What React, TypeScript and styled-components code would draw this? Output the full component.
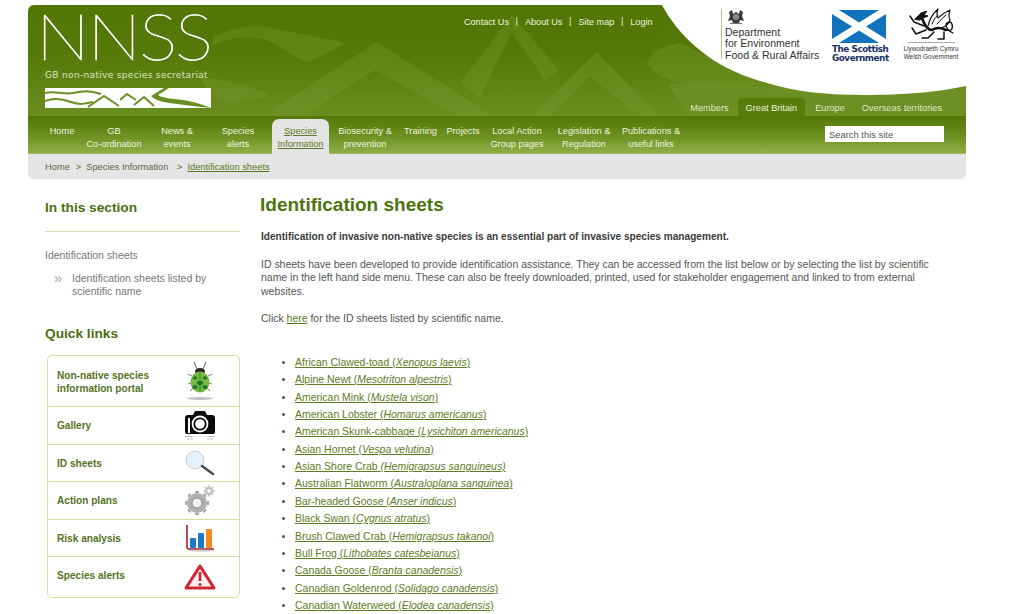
import styled, { createGlobalStyle } from "styled-components";

const GlobalStyle = createGlobalStyle`
    html, body {
        margin: 0;
        padding: 0;
        background: #fff;
        height: 614px;
        overflow: hidden;
    }
    body {
        font-family: "Liberation Sans", Arial, sans-serif;
    }
`;

const Page = styled.div`
    width: 938px;
    padding: 5px 0 0 28px;
`;

const Banner = styled.header`
    position: relative;
    display: flex;
    height: 111px;
    padding-left: 17px;
    box-sizing: border-box;
    border-radius: 6px 0 0 0;
    overflow: hidden;
    background: linear-gradient(180deg, #537706 0%, #567a0a 45%, #6a8e20 100%);
`;

const BannerArt = styled.svg`
    position: absolute;
    top: 0;
    left: 0;
`;

const Logo = styled.div`
    position: relative;
    width: 170px;
    flex: none;
    color: #fff;
`;

const LogoWord = styled.div`
    font-family: "Lato", sans-serif;
    font-weight: 100;
    font-size: 64px;
    line-height: 46px;
    height: 46px;
    margin: 8px 0 0 -9px;
    letter-spacing: -1.8px;
    -webkit-text-stroke: 0.7px #fff;
    transform: scaleX(1.12);
    transform-origin: left center;
    white-space: nowrap;
`;

const LogoTag = styled.div`
    font-family: "DejaVu Sans", sans-serif;
    font-size: 9.1px;
    line-height: 12px;
    margin-top: 10px;
    letter-spacing: 0.28px;
    color: #dbe5c2;
    white-space: nowrap;
`;

const LogoStrip = styled.svg`
    display: block;
    margin-top: 7px;
`;

const BannerRight = styled.div`
    position: relative;
    flex: 1;
    display: flex;
    flex-direction: column;
    justify-content: space-between;
`;

const TopRow = styled.div`
    display: flex;
    align-items: flex-start;
`;

const TopLinks = styled.nav`
    display: flex;
    margin: 11px 0 0 249px;
    font-size: 9.1px;
    line-height: 13px;
    color: #eef3df;
    white-space: nowrap;
`;

const TopLink = styled.span<{ $last?: boolean }>`
    padding-right: ${(p) => (p.$last ? 0 : 8)}px;
    margin-right: ${(p) => (p.$last ? 0 : 8)}px;
    position: relative;
    &::after {
        content: "${(p) => (p.$last ? "" : "|")}";
        position: absolute;
        right: -1px;
        top: -1px;
    }
`;

const GovLogos = styled.div`
    display: flex;
    margin-left: auto;
    padding: 3px 7px 0 0;
    align-items: flex-start;
`;

const Defra = styled.div`
    width: 100px;
    height: 50px;
    border-left: 1px solid #c9c08a;
    padding-left: 3px;
    margin-top: 1px;
    color: #333;
    font-size: 10.55px;
    line-height: 11.4px;
    white-space: nowrap;
`;

const Crest = styled.svg`
    display: block;
    margin: 0 0 3px 2px;
`;

const Scottish = styled.div`
    width: 54px;
    margin: 2px 0 0 7px;
    color: #16305f;
    font-family: "DejaVu Sans", sans-serif;
    font-weight: 700;
    font-size: 8.8px;
    line-height: 8.6px;
    letter-spacing: -0.45px;
    text-align: center;
    white-space: nowrap;
`;

const Flag = styled.svg`
    display: block;
    margin-bottom: 2px;
`;

const Welsh = styled.div`
    width: 56px;
    margin-left: 17px;
    color: #333;
    font-size: 6.4px;
    line-height: 8px;
    text-align: center;
    white-space: nowrap;
`;

const Dragon = styled.svg`
    display: block;
    margin: 0 auto 2px;
    border-bottom: 1px solid #aaa;
`;

const RegionTabs = styled.div`
    display: flex;
    align-self: flex-end;
    margin-right: 24px;
    font-size: 9.2px;
    line-height: 16px;
    white-space: nowrap;
`;

const RegionTab = styled.span<{ $active?: boolean; $gap: number }>`
    padding: 2px ${(p) => (p.$active ? 8 : 0)}px 0;
    margin-left: ${(p) => p.$gap}px;
    border-radius: 3px 3px 0 0;
    background: ${(p) => (p.$active ? "#587c0d" : "transparent")};
    color: ${(p) => (p.$active ? "#eef3df" : "#dfe8c8")};
`;

const NavBar = styled.nav`
    display: flex;
    height: 38px;
    padding-left: 18px;
    box-sizing: border-box;
    background: linear-gradient(180deg, #537806 0%, #6b8f20 50%, #8dae46 97%, #b5c97c 100%);
`;

const NavItem = styled.a<{ $w: number; $active?: boolean }>`
    width: ${(p) => p.$w}px;
    flex: none;
    box-sizing: border-box;
    margin-top: ${(p) => (p.$active ? 3 : 0)}px;
    padding-top: ${(p) => (p.$active ? 5.5 : 8.5)}px;
    font-size: 9.2px;
    line-height: 13px;
    text-align: center;
    white-space: nowrap;
    color: ${(p) => (p.$active ? "#5f7a2c" : "#eef3df")};
    text-decoration: ${(p) => (p.$active ? "underline" : "none")};
    background: ${(p) => (p.$active ? "#e4e4e4" : "transparent")};
    border-radius: ${(p) => (p.$active ? "7px 7px 0 0" : "0")};
`;

const SearchBox = styled.input`
    width: 119px;
    height: 16px;
    margin: 10px 22px 0 auto;
    padding: 0 0 0 4px;
    box-sizing: border-box;
    border: 0;
    outline: 0;
    background: #fff;
    font-family: inherit;
    font-size: 9.4px;
    &::placeholder {
        color: #555;
        opacity: 1;
    }
`;

const Crumbs = styled.div`
    display: flex;
    height: 25px;
    padding-left: 17px;
    align-items: center;
    background: #e4e4e4;
    border-radius: 0 0 6px 6px;
    font-size: 9.3px;
    color: #5c6b3c;
    white-space: nowrap;
`;

const CrumbSep = styled.span`
    margin: 0 5px 0 6px;
`;

const CrumbCurrent = styled.a`
    color: #587a1c;
    text-decoration: underline;
`;

const Main = styled.main`
    display: flex;
    padding-left: 17px;
`;

const Sidebar = styled.aside`
    width: 195px;
    flex: none;
    padding-top: 20px;
`;

const SideHeading = styled.h3`
    margin: 0;
    font-size: 13.7px;
    line-height: 17px;
    font-weight: 700;
    color: #4a6e12;
`;

const SideRule = styled.div`
    height: 1px;
    margin: 15px 0 16px;
    background: #d8deaa;
`;

const SideText = styled.div`
    font-size: 10.5px;
    line-height: 14px;
    color: #777;
`;

const SideSub = styled.div`
    display: flex;
    margin: 10px 0 27px 9px;
    font-size: 10.5px;
    line-height: 13px;
    color: #777;
`;

const Chevrons = styled.span`
    width: 18px;
    flex: none;
    font-size: 15px;
    line-height: 11px;
    color: #aaa;
`;

const QuickBox = styled.div`
    width: 193px;
    margin: 13px 0 0 2px;
    box-sizing: border-box;
    border: 1px solid #d6e29f;
    border-radius: 5px;
`;

const QuickRow = styled.a<{ $h: number; $last?: boolean }>`
    display: flex;
    align-items: center;
    justify-content: space-between;
    height: ${(p) => p.$h}px;
    box-sizing: border-box;
    padding: 0 23px 0 9px;
    border-bottom: ${(p) => (p.$last ? "0" : "1px solid #d6e29f")};
    font-size: 10.1px;
    line-height: 12.6px;
    font-weight: 700;
    color: #54731f;
`;

const QuickLabel = styled.span<{ $top: number; $bottom: number }>`
    padding: ${(p) => p.$top}px 0 ${(p) => p.$bottom}px;
`;

const Content = styled.section`
    width: 680px;
    margin-left: 21px;
    padding-top: 14px;
    font-size: 10.47px;
    line-height: 13.6px;
    color: #555;
`;

const Title = styled.h1`
    margin: 0 0 14px -1px;
    font-size: 19px;
    line-height: 23px;
    font-weight: 700;
    color: #4d7410;
`;

const Para = styled.p<{ $strong?: boolean }>`
    margin: 0 0 14px;
    font-size: ${(p) => (p.$strong ? 10.1 : 10.47)}px;
    font-weight: ${(p) => (p.$strong ? 700 : 400)};
    color: ${(p) => (p.$strong ? "#3b3b3b" : "#555")};
`;

const InlineLink = styled.a`
    color: #587a1c;
    text-decoration: underline;
`;

const SheetList = styled.ul`
    margin: 30px 0 0;
    padding: 0 0 0 34px;
`;

const SheetItem = styled.li`
    height: 17.36px;
    color: #4d5a30;
`;

const SheetLink = styled.a`
    color: #5d7c24;
    text-decoration: underline;
`;

const mainNav = [
    { w: 32, lines: ["Home"] },
    { w: 72, lines: ["GB", "Co-ordination"] },
    { w: 54, lines: ["News &", "events"] },
    { w: 68, lines: ["Species", "alerts"] },
    { w: 57, lines: ["Species", "Information"], active: true },
    { w: 72, lines: ["Biosecurity &", "prevention"] },
    { w: 39, lines: ["Training"] },
    { w: 46, lines: ["Projects"] },
    { w: 62, lines: ["Local Action", "Group pages"] },
    { w: 72, lines: ["Legislation &", "Regulation"] },
    { w: 62, lines: ["Publications &", "useful links"] },
];

// plain part, italic part, tail
const sheets: [string, string, string][] = [
    ["African Clawed-toad (", "Xenopus laevis", ")"],
    ["Alpine Newt (", "Mesotriton alpestris", ")"],
    ["American Mink (", "Mustela vison", ")"],
    ["American Lobster (", "Homarus americanus", ")"],
    ["American Skunk-cabbage (", "Lysichiton americanus", ")"],
    ["Asian Hornet (", "Vespa velutina", ")"],
    ["Asian Shore Crab ", "(Hemigrapsus sanguineus)", ""],
    ["Australian Flatworm (", "Australoplana sanguinea", ")"],
    ["Bar-headed Goose (", "Anser indicus", ")"],
    ["Black Swan (", "Cygnus atratus", ")"],
    ["Brush Clawed Crab (", "Hemigrapsus takanoi", ")"],
    ["Bull Frog (", "Lithobates catesbeianus", ")"],
    ["Canada Goose (", "Branta canadensis", ")"],
    ["Canadian Goldenrod (", "Solidago canadensis", ")"],
    ["Canadian Waterweed (", "Elodea canadensis", ")"],
];

const BugIcon = () => (
    <svg width="32" height="40" viewBox="0 0 32 40">
        <path d="M13 8 L10 1 M19 8 L22 1" stroke="#666" strokeWidth="1" fill="none" />
        <path d="M8 15 L4 13 M24 15 L28 13 M7 22 L4 23 M25 22 L28 23 M9 27 L6 30 M23 27 L26 30" stroke="#7c8d62" strokeWidth="1" />
        <ellipse cx="16" cy="10.5" rx="5" ry="3.5" fill="#2c2420" />
        <ellipse cx="16" cy="21" rx="9.5" ry="10.5" fill="#79bc45" />
        <path d="M16 12 V31" stroke="#3c7a22" strokeWidth="1" />
        <ellipse cx="11" cy="17" rx="2.2" ry="1.8" fill="#1f7a2c" />
        <ellipse cx="21" cy="17" rx="2.2" ry="1.8" fill="#1f7a2c" />
        <ellipse cx="16" cy="22" rx="3.2" ry="2.2" fill="#1f7a2c" />
        <ellipse cx="11" cy="26" rx="2.6" ry="2" fill="#1f7a2c" />
        <ellipse cx="21" cy="26" rx="2.6" ry="2" fill="#1f7a2c" />
        <ellipse cx="16" cy="37.5" rx="13" ry="1.4" fill="#c0c0c6" />
    </svg>
);

const CameraIcon = () => (
    <svg width="32" height="32" viewBox="0 0 32 32">
        <path d="M1 9 Q1 6 4 6 H9 L11 2 H21 L23 6 H28 Q31 6 31 9 V23 Q31 25 28 25 H4 Q1 25 1 23 Z" fill="#0b0b0b" />
        <circle cx="16" cy="15" r="8.4" fill="#fff" />
        <circle cx="16" cy="15" r="6.6" fill="#0b0b0b" />
        <circle cx="16" cy="15" r="4.8" fill="#fff" />
        <rect x="4" y="9" width="2" height="15" fill="#fff" />
        <path d="M1 27 H31 V28 H24 Q16 25 8 28 H1 Z" fill="#bbb" />
        <path d="M3 30 H9 M23 30 H29" stroke="#ddd" strokeWidth="1.5" />
    </svg>
);

const LensIcon = () => (
    <svg width="32" height="26" viewBox="0 0 32 26">
        <circle cx="11" cy="10" r="9" fill="#e6f2fb" stroke="#c3cdd4" strokeWidth="1" />
        <path d="M18 16 L29 24" stroke="#4a4f54" strokeWidth="2.6" strokeLinecap="round" />
    </svg>
);

const gearTeeth = (n: number) => Array.from({ length: n }, (_, i) => (i * 360) / n);

const GearIcon = () => (
    <svg width="32" height="32" viewBox="0 0 32 32">
        {gearTeeth(8).map((a) => (
            <path key={a} d="M13 9 V7" stroke="#a8a8a8" strokeWidth="4" transform={`rotate(${a} 13 19)`} />
        ))}
        <circle cx="13" cy="19" r="10" fill="#b0b0b0" />
        <circle cx="13" cy="19" r="5" fill="#f0f0f0" stroke="#8a8a8a" strokeWidth="1" />
        {gearTeeth(8).map((a) => (
            <path key={a} d="M25 3 V1.5" stroke="#c4c4c4" strokeWidth="1.8" transform={`rotate(${a} 25 7)`} />
        ))}
        <circle cx="25" cy="7" r="4" fill="#c4c4c4" />
        <circle cx="25" cy="7" r="1.7" fill="#fff" />
    </svg>
);

const ChartIcon = () => (
    <svg width="32" height="28" viewBox="0 0 32 28">
        <path d="M3 1 V23 Q3 25 5 25 H30" stroke="#9c2430" strokeWidth="1.6" fill="none" />
        <rect x="6" y="14" width="6" height="10" rx="1" fill="#1f78c8" />
        <rect x="14" y="9" width="6" height="15" rx="1" fill="#1f78c8" />
        <rect x="22" y="5" width="6" height="19" rx="1" fill="#f28a1c" />
        <ellipse cx="17" cy="26.6" rx="14" ry="0.8" fill="#c9c9c9" />
    </svg>
);

const AlertIcon = () => (
    <svg width="32" height="28" viewBox="0 0 32 28">
        <path d="M16 3 L30 25 H2 Z" fill="#fbeeee" stroke="#cf2233" strokeWidth="3" strokeLinejoin="round" />
        <path d="M16 9 V18" stroke="#cf2233" strokeWidth="2.6" />
        <circle cx="16" cy="21.4" r="1.5" fill="#cf2233" />
    </svg>
);

const quickLinks = [
    { h: 51, top: 4, bottom: 0, label: ["Non-native species", "information portal"], icon: <BugIcon /> },
    { h: 37.5, top: 2, bottom: 0, label: ["Gallery"], icon: <CameraIcon /> },
    { h: 37.5, top: 3, bottom: 0, label: ["ID sheets"], icon: <LensIcon /> },
    { h: 37.5, top: 2, bottom: 0, label: ["Action plans"], icon: <GearIcon /> },
    { h: 37.5, top: 3, bottom: 0, label: ["Risk analysis"], icon: <ChartIcon /> },
    { h: 40, top: 0, bottom: 2, label: ["Species alerts"], icon: <AlertIcon /> },
];

export default function App() {
    return (
        <>
            <GlobalStyle />
            <Page>
                <Banner>
                    <BannerArt width="938" height="111" viewBox="0 0 938 111">
                        <g fill="#7b9c35" opacity="0.3">
                            <path d="M235 111 L349 37 L465 111 H430 L347 65 L275 111 Z" />
                            <path d="M504 111 L569 47 L631 111 H612 L562 72 L522 111 Z" />
                            <path d="M432 78 L484 10 L531 65 L517 75 L484 28 L452 92 Z" />
                            <path d="M185 32 Q215 18 239 22 L319 38 L279 58 L239 35 Q210 28 185 40 Z" />
                            <path d="M170 72 Q215 76 242 90 Q215 100 190 95 Z" />
                        </g>
                        <path d="M619 58 Q625 42 652 38 L720 72 L834 90 L938 81 V111 Q800 85 700 85 Q630 80 619 58 Z" fill="#7d9e37" opacity="0.3" />
                        <path d="M640 78 Q760 85 938 81 V111 H660 Z" fill="#6e9127" opacity="0.7" />
                        <path d="M634 0 C650 30 680 58 720 72 S790 90 834 90 S910 87 938 81 V0 Z" fill="#fff" />
                    </BannerArt>
                    <Logo>
                        <LogoWord>NNSS</LogoWord>
                        <LogoTag>GB non-native species secretariat</LogoTag>
                        <LogoStrip width="166" height="20" viewBox="0 0 166 20">
                            <rect width="166" height="20" fill="#fff" />
                            <g fill="none" stroke="#6b8f22" strokeWidth="2">
                                <path d="M0 5 C10 2 18 7 28 5 S44 2 56 6" />
                                <path d="M0 13 C8 10 18 11 26 14 S40 16 48 14" />
                                <path d="M43 19 L59 8 L74 18" />
                                <path d="M75 12 L82 6 L91 12" />
                                <path d="M89 17 L99 9 L109 18" />
                            </g>
                            <path d="M119 0 H124 L113 7 Q117 10 130 11 Q150 13 166 20 V20 Q146 18 124 15 Q110 13 106 8 Z" fill="#6b8f22" />
                        </LogoStrip>
                    </Logo>
                    <BannerRight>
                        <TopRow>
                            <TopLinks>
                                <TopLink>Contact Us</TopLink>
                                <TopLink>About Us</TopLink>
                                <TopLink>Site map</TopLink>
                                <TopLink $last>Login</TopLink>
                            </TopLinks>
                            <GovLogos>
                                <Defra>
                                    <Crest width="18" height="15" viewBox="0 0 18 15">
                                        <path d="M2 3 L5 1 L6 5 L9 3 L12 5 L13 1 L16 3 L15 7 L17 12 L13 11 L12 14 H6 L5 11 L1 12 L3 7 Z" fill="#3a3a3a" />
                                        <circle cx="9" cy="8" r="3" fill="#8a8a8a" />
                                        <path d="M3 14.4 H15" stroke="#666" strokeWidth="1" />
                                    </Crest>
                                    Department
                                    <br />
                                    for Environment
                                    <br />
                                    Food &amp; Rural Affairs
                                </Defra>
                                <Scottish>
                                    <Flag width="54" height="33" viewBox="0 0 54 33">
                                        <rect width="54" height="33" fill="#1273bd" />
                                        <path d="M0 0 H7 L27 12.5 L47 0 H54 V4 L34 16.5 L54 29 V33 H47 L27 20.5 L7 33 H0 V29 L20 16.5 L0 4 Z" fill="#fff" />
                                    </Flag>
                                    The Scottish
                                    <br />
                                    Government
                                </Scottish>
                                <Welsh>
                                    <Dragon width="47" height="34" viewBox="0 0 47 34">
                                        <g fill="none" stroke="#111" strokeLinejoin="round" strokeLinecap="round">
                                            <path d="M7 11 L13 5 L19 3 L16 7 L20 8 L15 10 L12 12 Z" fill="#111" strokeWidth="1" />
                                            <path d="M14 10 Q18 22 24 22 Q30 18 38 22" strokeWidth="2.6" />
                                            <path d="M20 18 Q22 8 30 1 Q28 7 30 10 Q35 5 42 2 Q40 9 42 12 Q40 18 33 20" strokeWidth="1.2" />
                                            <path d="M24 16 Q26 10 30 7 M29 16 Q33 11 38 7" strokeWidth="1" />
                                            <path d="M16 18 L6 14 L2 8 M18 22 L8 26 L4 20 M26 24 L20 30 L14 30 M36 24 L36 31 L30 31" strokeWidth="1.5" />
                                            <path d="M38 22 Q46 24 44 16 Q42 12 38 16 Q38 22 45 25" strokeWidth="1.3" />
                                        </g>
                                    </Dragon>
                                    Llywodraeth Cymru
                                    <br />
                                    Welsh Government
                                </Welsh>
                            </GovLogos>
                        </TopRow>
                        <RegionTabs>
                            <RegionTab $gap={0}>Members</RegionTab>
                            <RegionTab $gap={9} $active>Great Britain</RegionTab>
                            <RegionTab $gap={10}>Europe</RegionTab>
                            <RegionTab $gap={17}>Overseas territories</RegionTab>
                        </RegionTabs>
                    </BannerRight>
                </Banner>
                <NavBar>
                    {mainNav.map((item) => (
                        <NavItem key={item.lines.join(" ")} $w={item.w} $active={item.active}>
                            {item.lines[0]}
                            {item.lines[1] && <br />}
                            {item.lines[1]}
                        </NavItem>
                    ))}
                    <SearchBox placeholder="Search this site" />
                </NavBar>
                <Crumbs>
                    Home
                    <CrumbSep>&gt;</CrumbSep>
                    Species Information
                    <CrumbSep>&nbsp;&gt;</CrumbSep>
                    <CrumbCurrent>Identification sheets</CrumbCurrent>
                </Crumbs>
                <Main>
                    <Sidebar>
                        <SideHeading>In this section</SideHeading>
                        <SideRule />
                        <SideText>Identification sheets</SideText>
                        <SideSub>
                            <Chevrons>»</Chevrons>
                            <span>
                                Identification sheets listed by
                                <br />
                                scientific name
                            </span>
                        </SideSub>
                        <SideHeading>Quick links</SideHeading>
                        <QuickBox>
                            {quickLinks.map((row, i) => (
                                <QuickRow key={row.label[0]} $h={row.h} $last={i === quickLinks.length - 1}>
                                    <QuickLabel $top={row.top} $bottom={row.bottom}>
                                        {row.label[0]}
                                        {row.label[1] && <br />}
                                        {row.label[1]}
                                    </QuickLabel>
                                    {row.icon}
                                </QuickRow>
                            ))}
                        </QuickBox>
                    </Sidebar>
                    <Content>
                        <Title>Identification sheets</Title>
                        <Para $strong>
                            Identification of invasive non-native species is an essential part of invasive species management.
                        </Para>
                        <Para>
                            ID sheets have been developed to provide identification assistance. They can be accessed from the list below or by selecting the list by scientific name in the left hand side menu. These can also be freely downloaded, printed, used for stakeholder engagement and linked to from external websites.
                        </Para>
                        <Para>
                            Click <InlineLink>here</InlineLink> for the ID sheets listed by scientific name.
                        </Para>
                        <SheetList>
                            {sheets.map(([plain, latin, tail]) => (
                                <SheetItem key={plain}>
                                    <SheetLink>
                                        {plain}
                                        <em>{latin}</em>
                                        {tail}
                                    </SheetLink>
                                </SheetItem>
                            ))}
                        </SheetList>
                    </Content>
                </Main>
            </Page>
        </>
    );
}
